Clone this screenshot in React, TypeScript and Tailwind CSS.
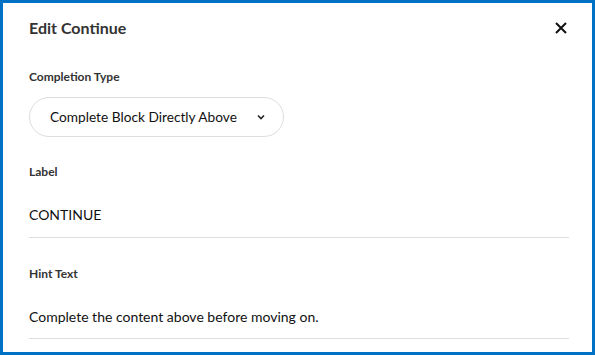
import React from "react";

export default function App() {
  return (
    <div className="w-[595px] h-[355px] bg-white border-[3px] border-[#0071c5] text-[#222] pl-[26px] pr-[23px] flex flex-col" style={{ fontFamily: "Lato, 'Noto Sans', sans-serif" }}>
      <div className="flex items-center justify-between h-[50px]">
        <h1 className="text-[16px] font-bold text-[#333]">Edit Continue</h1>
        <button className="w-[16px] h-[16px] flex items-center justify-center mr-0 mb-[1px]">
          <svg width="12" height="12" viewBox="0 0 12 12">
            <path d="M1 1L11 11M11 1L1 11" stroke="#111" strokeWidth="2" />
          </svg>
        </button>
      </div>
      <div className="mt-[16px] text-[12px] font-bold text-[#333] leading-[16px]">Completion Type</div>
      <div className="mt-[12px] w-[255px] h-[40px] rounded-full border border-[#dddddd] flex items-center pl-[20px] pr-[18px] justify-between">
        <span className="text-[13.7px] text-[#111]">Complete Block Directly Above</span>
        <svg width="8" height="6" viewBox="0 0 8 6">
          <path d="M1 1.5L4 4.5L7 1.5" stroke="#222" strokeWidth="1.6" fill="none" />
        </svg>
      </div>
      <div className="mt-[27px] text-[12px] font-bold text-[#333] leading-[16px]">Label</div>
      <div className="mt-[26px] text-[14px] text-[#111] leading-[18px]">CONTINUE</div>
      <div className="mt-[13px] h-[1px] bg-[#dddddd]" />
      <div className="mt-[28px] text-[12px] font-bold text-[#333] leading-[16px]">Hint Text</div>
      <div className="mt-[26px] text-[14px] text-[#111] leading-[18px]">Complete the content above before moving on.</div>
      <div className="mt-[12px] h-[1px] bg-[#dddddd]" />
    </div>
  );
}
